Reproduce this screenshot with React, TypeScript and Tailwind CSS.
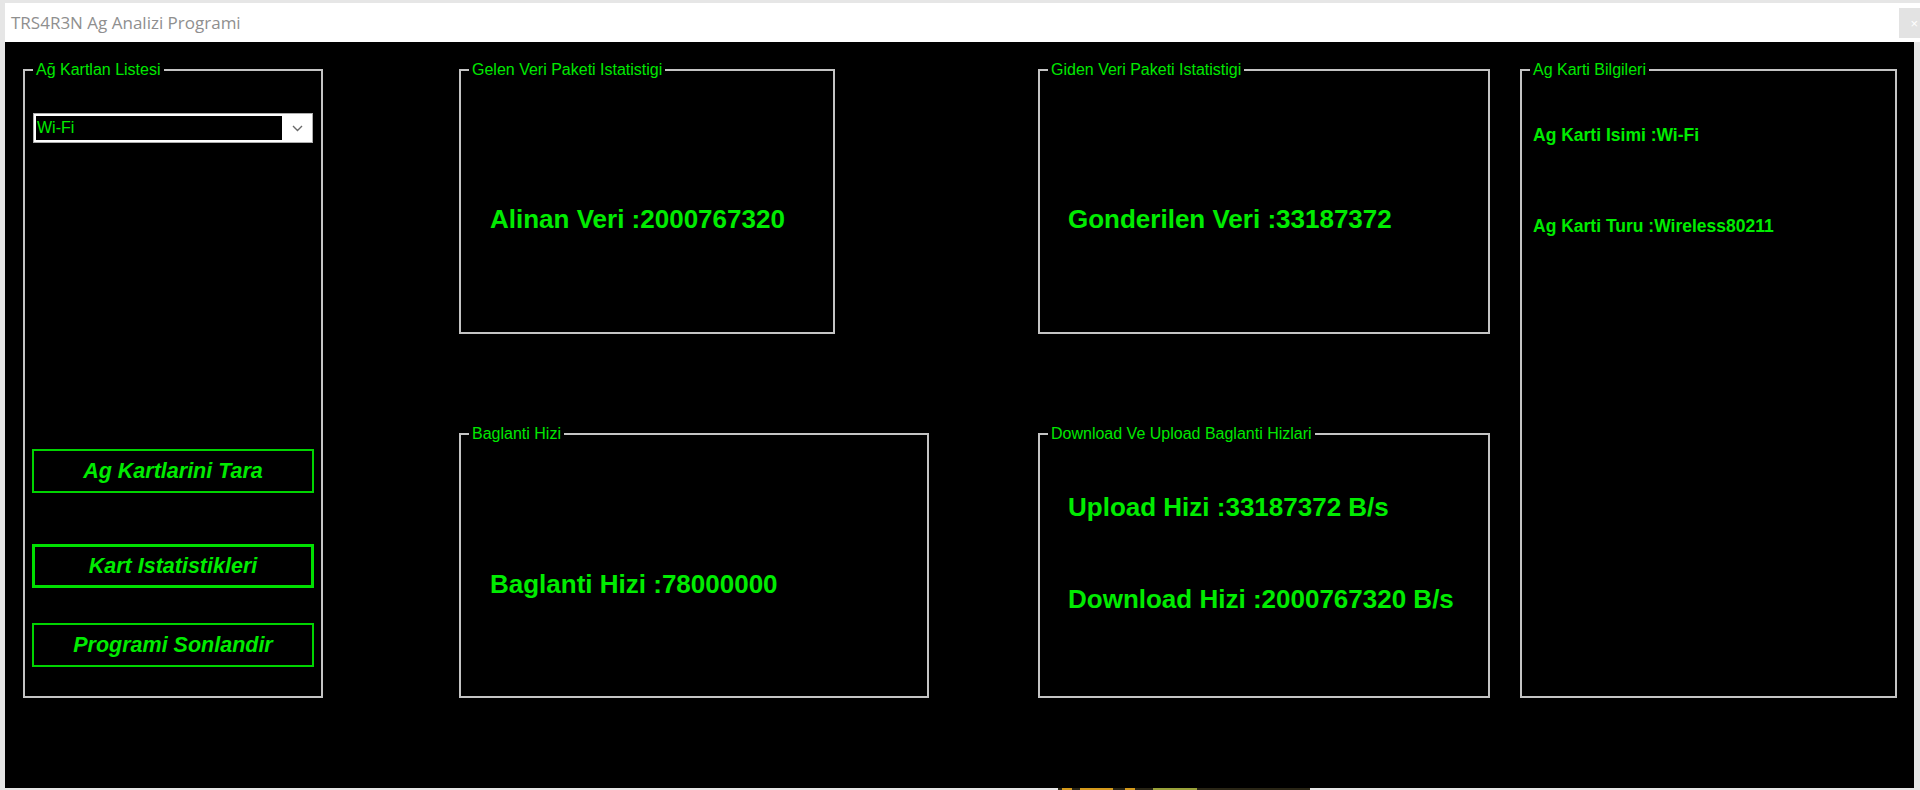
import React from 'react';

const sans = { fontFamily: '"Liberation Sans", Arial, sans-serif' };

interface GroupBoxProps {
  title: string;
  className?: string;
  children?: React.ReactNode;
}

function GroupBox({ title, className, children }: GroupBoxProps) {
  return (
    <fieldset className={`border-2 border-[#c4c4c4] min-w-0 ${className ?? ''}`}>
      <legend className="ml-[8px] px-[3px] text-[16px] leading-[16px] text-[#00e800]">{title}</legend>
      {children}
    </fieldset>
  );
}

function BigLine({ text, className }: { text: string; className?: string }) {
  return (
    <div className={`text-[26px] leading-[30px] font-bold text-[#00ec00] whitespace-nowrap ${className ?? ''}`}>
      {text}
    </div>
  );
}

function SideButton({ label, thick, className }: { label: string; thick?: boolean; className?: string }) {
  return (
    <button
      className={`w-[282px] h-[44px] ml-[7px] flex items-center justify-center bg-black text-[#00ec00] text-[21.5px] font-bold italic ${
        thick ? 'border-[3px] border-[#00e000]' : 'border-2 border-[#00d400]'
      } ${className ?? ''}`}
    >
      {label}
    </button>
  );
}

export default function App() {
  return (
    <div className="w-full h-[790px] bg-[#e6e6e6] pt-[3px] flex flex-col overflow-hidden" style={sans}>
      {/* window title bar */}
      <div className="ml-[5px] h-[39px] bg-white flex justify-between">
        <div
          className="pl-[6px] flex items-center text-[17px] text-[#8f8f8f]"
          style={{ fontFamily: '"Open Sans", "Liberation Sans", sans-serif' }}
        >
          TRS4R3N Ag Analizi Programi
        </div>
        <div className="mt-[5px] w-[21px] h-[30px] bg-[#e3e3e3] flex items-center justify-end pr-[2px] text-[13px] text-white leading-none">
          ×
        </div>
      </div>

      {/* form body */}
      <div className="ml-[5px] w-[1909px] h-[746px] bg-black flex items-start pt-[20px] pl-[18px]">
        {/* column 1 */}
        <GroupBox title="Ağ Kartlan Listesi" className="w-[300px] h-[636px]">
          <div className="flex flex-col">
            <div className="mt-[35px] ml-[8px] w-[280px] h-[30px] bg-white border border-[#adadad] p-[2px] flex">
              <div className="flex-1 bg-black text-[#00ec00] text-[16px] leading-[24px] pl-[1px]">Wi-Fi</div>
              <div className="w-[28px] flex items-center justify-center pl-[3px]">
                <svg width="11" height="7" viewBox="0 0 11 7">
                  <polyline points="1,1 5.5,5.5 10,1" fill="none" stroke="#6a6a6a" strokeWidth="1.4" />
                </svg>
              </div>
            </div>
            <SideButton label="Ag Kartlarini Tara" className="mt-[306px]" />
            <SideButton label="Kart Istatistikleri" thick className="mt-[51px]" />
            <SideButton label="Programi Sonlandir" className="mt-[35px]" />
          </div>
        </GroupBox>

        {/* column 2 */}
        <div className="ml-[136px] w-[470px] flex flex-col">
          <GroupBox title="Gelen Veri Paketi Istatistigi" className="w-[376px] h-[272px]">
            <div className="pt-[126px] pl-[29px]">
              <BigLine text="Alinan Veri :2000767320" />
            </div>
          </GroupBox>
          <GroupBox title="Baglanti Hizi" className="mt-[92px] w-[470px] h-[272px]">
            <div className="pt-[127px] pl-[29px]">
              <BigLine text="Baglanti Hizi :78000000" />
            </div>
          </GroupBox>
        </div>

        {/* column 3 */}
        <div className="ml-[109px] w-[452px] flex flex-col">
          <GroupBox title="Giden Veri Paketi Istatistigi" className="w-[452px] h-[272px]">
            <div className="pt-[126px] pl-[28px]">
              <BigLine text="Gonderilen Veri :33187372" />
            </div>
          </GroupBox>
          <GroupBox title="Download Ve Upload Baglanti Hizlari" className="mt-[92px] w-[452px] h-[272px]">
            <div className="pt-[50px] pl-[28px]">
              <BigLine text="Upload Hizi :33187372 B/s" />
              <BigLine text="Download Hizi :2000767320 B/s" className="mt-[62px]" />
            </div>
          </GroupBox>
        </div>

        {/* column 4 */}
        <GroupBox title="Ag Karti Bilgileri" className="ml-[30px] w-[377px] h-[636px]">
          <div className="pt-[47px] pl-[11px] text-[17.5px] leading-[20px] font-bold text-[#00ec00]">
            <div>Ag Karti Isimi :Wi-Fi</div>
            <div className="mt-[71px]">Ag Karti Turu :Wireless80211</div>
          </div>
        </GroupBox>
      </div>

      {/* bit of taskbar peeking under the window */}
      <div className="h-[2px] flex">
        <div className="ml-[1058px] w-[252px] h-full bg-[#2a2616] flex gap-[8px]">
          <div className="ml-[4px] w-[10px] bg-[#d49a1c]" />
          <div className="w-[33px] bg-[#d49a1c]" />
          <div className="ml-[4px] w-[10px] bg-[#d49a1c]" />
          <div className="ml-[10px] w-[44px] bg-[#9aa23a]" />
        </div>
      </div>
    </div>
  );
}
